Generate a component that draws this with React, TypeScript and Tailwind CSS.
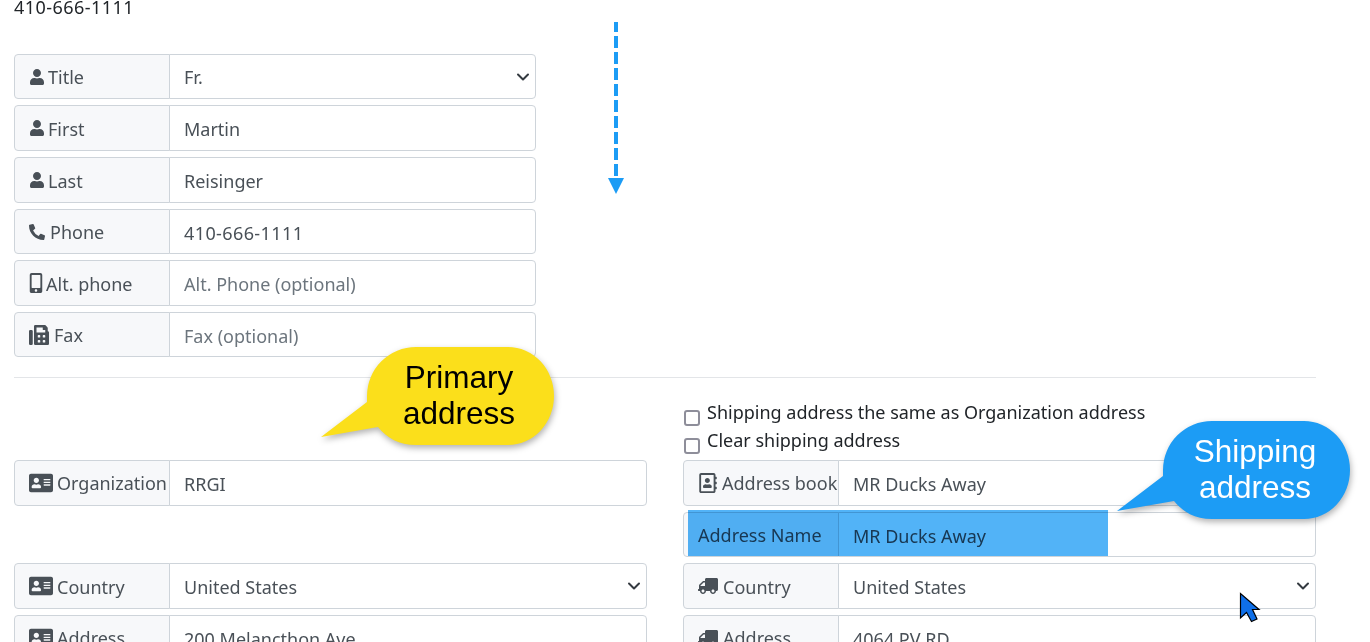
import type { ReactNode } from "react";
import { ChevronDown } from "lucide-react";
import {
  FaAddressCard,
  FaFax,
  FaMobileAlt,
  FaPhoneAlt,
  FaRegAddressBook,
  FaTruck,
  FaUser,
} from "react-icons/fa";

interface RowProps {
  icon?: ReactNode;
  label: string;
  value?: string;
  placeholder?: string;
  select?: boolean;
  wide?: boolean;
}

function Row({ icon, label, value, placeholder, select, wide }: RowProps) {
  return (
    <div className="flex h-[45.6px] w-full">
      <label className="flex w-[156px] shrink-0 items-center gap-[3px] whitespace-nowrap rounded-l-[4px] border border-[#ced4da] bg-[#f7f8fa] pl-[14px] pt-[2.5px] text-[#495057]">
        {icon}
        {label}
      </label>
      <div className="relative -ml-px min-w-0 flex-1">
        {select ? (
          <>
            <select
              defaultValue={value}
              className="h-full w-full appearance-none rounded-r-[4px] border border-[#ced4da] bg-white pl-[14px] pt-[2.5px] text-[#495057] outline-none"
            >
              <option>{value}</option>
            </select>
            <ChevronDown size={20} strokeWidth={2.4} className="pointer-events-none absolute right-[3px] top-[13px] text-[#343a40]" />
          </>
        ) : (
          <input
            readOnly
            value={value ?? ""}
            placeholder={placeholder}
            className={`h-full w-full rounded-r-[4px] border border-[#ced4da] bg-white pl-[14px] pt-[2.5px] text-[#495057] outline-none placeholder:text-[#6c757d] ${wide ? "tracking-[0.4px]" : ""}`}
          />
        )}
      </div>
    </div>
  );
}

function Callout({ lines, fill, text, className }: { lines: string[]; fill: string; text: string; className: string }) {
  return (
    <div className={`absolute h-[102px] w-[233px] ${className}`}>
      <svg width="233" height="102" viewBox="0 0 233 102" className="absolute inset-0 overflow-visible drop-shadow-[1px_3px_3px_rgba(0,0,0,0.3)]">
        <path
          d="M95 0H187A46 49 0 0 1 233 49A46 49 0 0 1 187 98H95C78 98 66 91 57 80L0 90L46 55V49A49 49 0 0 1 95 0Z"
          fill={fill}
        />
      </svg>
      <div className={`absolute left-[45px] top-[12px] w-[186px] text-center font-['Liberation_Sans',sans-serif] text-[31.5px] leading-[36px] ${text}`}>
        {lines.map((line) => (
          <div key={line}>{line}</div>
        ))}
      </div>
    </div>
  );
}

export default function App() {
  const iconCls = "shrink-0 -translate-y-px text-[#495057]";
  const checkCls = "mt-[10px] h-4 w-4 shrink-0 appearance-none rounded-[3px] border-2 border-[#8e8e9a] bg-white";
  return (
    <div className="relative h-[642px] w-[1370px] overflow-hidden bg-white px-[14px] font-['Noto_Sans',sans-serif] text-[18px]">
      {/* Contact */}
      <div className="flow-root h-[53.8px]">
        <div className="-mt-[7px] text-[#212529] leading-[28px] tracking-[0.45px]">410-666-1111</div>
      </div>
      <div className="flex w-[522px] flex-col gap-[6px]">
        <Row select icon={<FaUser size={16} className={iconCls} />} label="Title" value="Fr." />
        <Row icon={<FaUser size={16} className={iconCls} />} label="First" value="Martin" />
        <Row icon={<FaUser size={16} className={iconCls} />} label="Last" value="Reisinger" />
        <Row wide icon={<FaPhoneAlt size={16} className={`${iconCls} mr-[2px]`} />} label="Phone" value="410-666-1111" />
        <Row icon={<FaMobileAlt className={`${iconCls} h-[20px] w-[14px]`} />} label="Alt. phone" placeholder="Alt. Phone (optional)" />
        <Row icon={<FaFax size={20} className={`${iconCls} mr-[2px]`} />} label="Fax" placeholder="Fax (optional)" />
      </div>

      <div className="mb-[20.4px] mt-[19.2px] h-px w-[1302px] bg-[#e3e5e8]" />

      {/* Addresses */}
      <div className="grid w-[1302px] grid-cols-2 gap-x-[36px] gap-y-[6px]">
        <div className="col-start-2 h-[56px] pl-px text-[#212529]">
          <label className="flex h-[28px] items-center gap-[7px] pt-[2px]">
            <input type="checkbox" className={checkCls} />
            Shipping address the same as Organization address
          </label>
          <label className="flex h-[28px] items-center gap-[7px] pt-[2px]">
            <input type="checkbox" className={checkCls} />
            Clear shipping address
          </label>
        </div>
        <div className="col-start-1 row-start-2">
          <Row icon={<FaAddressCard size={24} className={`${iconCls} mr-px`} />} label="Organization" value="RRGI" />
        </div>
        <Row icon={<FaRegAddressBook size={20} className={`${iconCls} mr-px`} />} label="Address book" value="MR Ducks Away" />
        <div className="col-start-2">
          <Row label="Address Name" value="MR Ducks Away" />
        </div>
        <Row select icon={<FaAddressCard size={24} className={`${iconCls} mr-px`} />} label="Country" value="United States" />
        <Row select icon={<FaTruck size={20} className={`${iconCls} mr-[2px] -scale-x-100`} />} label="Country" value="United States" />
        <Row icon={<FaAddressCard size={24} className={`${iconCls} mr-px`} />} label="Address" value="200 Melancthon Ave" />
        <Row icon={<FaTruck size={20} className={`${iconCls} mr-[2px] -scale-x-100`} />} label="Address" value="4064 PV RD" />
      </div>

      {/* Annotations drawn over the page */}
      <svg width="20" height="176" viewBox="0 0 20 176" className="absolute left-[606px] top-[20px]">
        <path d="M10 2V158" stroke="#1c9cf5" strokeWidth="4" strokeDasharray="12 4" strokeDashoffset="2" />
        <path d="M2 158H18L10 174Z" fill="#1c9cf5" />
      </svg>
      <div className="absolute left-[688px] top-[510px] h-[46px] w-[420px] bg-[#52b3f7] mix-blend-multiply" />
      <Callout lines={["Primary", "address"]} fill="#fbdf1b" text="text-black" className="left-[321px] top-[347px]" />
      <Callout lines={["Shipping", "address"]} fill="#1c9cf5" text="text-white" className="left-[1117px] top-[421px]" />
      <svg width="22" height="32" viewBox="0 0 22 32" className="absolute left-[1239px] top-[592px]">
        <path d="M1.5 1.5V26L7.5 20.5L12.5 29.5L18 27L13.5 17.5H20Z" fill="#0f6fe8" stroke="#000" strokeWidth="1.2" />
      </svg>
    </div>
  );
}
